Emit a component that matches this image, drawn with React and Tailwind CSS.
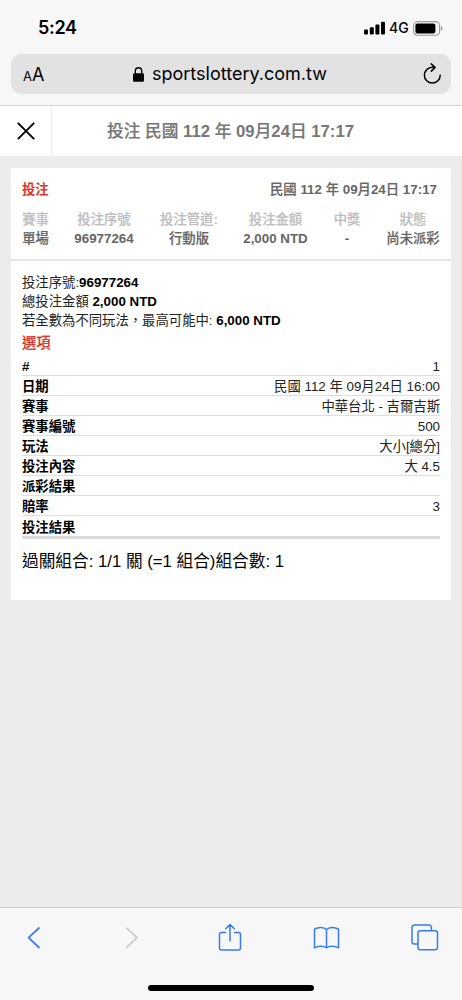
import React from "react";

const summary = [
  { label: "賽事", value: "單場", pos: "w-[27px]" },
  { label: "投注序號", value: "96977264", pos: "ml-[25px] w-[60px]" },
  { label: "投注管道:", value: "行動版", pos: "ml-[25px] w-[60px]" },
  { label: "投注金額", value: "2,000 NTD", pos: "ml-[24px] w-[65px]" },
  { label: "中獎", value: "-", pos: "ml-[24px] w-[30px]" },
  { label: "狀態", value: "尚未派彩", pos: "ml-[24px] w-[54px]" },
];

const rows = [
  ["#", "1"],
  ["日期", "民國 112 年 09月24日 16:00"],
  ["賽事", "中華台北 - 吉爾吉斯"],
  ["賽事編號", "500"],
  ["玩法", "大小[總分]"],
  ["投注內容", "大 4.5"],
  ["派彩結果", ""],
  ["賠率", "3"],
  ["投注結果", ""],
];

// Chinese glyphs take a medium weight while Latin letters and digits stay bold.
function Strong({ children }) {
  return children.split(/([\u4e00-\u9fff]+)/).map((part, i) =>
    /[\u4e00-\u9fff]/.test(part) ? (
      <span key={i} className="font-medium [-webkit-text-stroke:0.2px_currentColor]">{part}</span>
    ) : (
      <span key={i} className="font-bold">{part}</span>
    )
  );
}

function StatusBar() {
  return (
    <div className="flex h-[54px] items-start justify-between pr-[19px] pl-[38px] font-['Inter','Liberation_Sans',sans-serif] text-black">
      <span className="mt-[16px] text-[18px] leading-6 font-semibold tracking-[-0.3px]">5:24</span>
      <div className="mt-[16px] flex h-6 items-center">
        <svg className="h-[14px] w-[21px]" viewBox="0 0 21 14">
          <rect x="0" y="8.5" width="4" height="5" rx="1" />
          <rect x="5.8" y="6.2" width="4" height="7.3" rx="1" />
          <rect x="11.4" y="3.5" width="4" height="10" rx="1" />
          <rect x="17" y="0.7" width="4" height="12.8" rx="1" />
        </svg>
        <span className="ml-[4px] w-[20px] text-[14px] leading-6 font-medium">4G</span>
        <svg className="ml-[4px] h-[15px] w-[30px]" viewBox="0 0 30 15">
          <rect x="0.6" y="0.6" width="26" height="13.6" rx="4" fill="none" stroke="#9b9b9b" strokeWidth="1.1" />
          <rect x="2.4" y="2.4" width="20" height="10" rx="2" />
          <path d="M27.9 5c1 .4 1.6 1.300 1.600 2.400s-.6 2-1.600 2.400z" fill="#9b9b9b" />
        </svg>
      </div>
    </div>
  );
}

function AddressBar() {
  return (
    <div className="mx-[11px] flex h-[40px] items-center rounded-[11px] bg-[#e2e2e3] text-black">
      <div className="ml-[12px] flex w-[24px] items-baseline pt-[2px] font-['Inter','Liberation_Sans',sans-serif] leading-6">
        <span className="text-[13px]">A</span>
        <span className="text-[18px]">A</span>
      </div>
      <svg className="ml-[86px] h-[15px] w-[11px]" viewBox="0 0 11 15">
        <rect x="0" y="6.300" width="11" height="8.500" rx="1.400" />
        <path d="M2.300 7V4.200a3.200 3.400 0 0 1 6.400 0V7" fill="none" stroke="#000" strokeWidth="1.400" />
      </svg>
      <span className="ml-[8px] w-[176px] font-['Inter','Liberation_Sans',sans-serif] text-[18px] leading-6 tracking-[0px] whitespace-nowrap">sportslottery.com.tw</span>
      <svg className="ml-[94px] h-[22px] w-[20px]" viewBox="0 0 20 22" fill="none" stroke="#000" strokeWidth="1.500" strokeLinecap="round" strokeLinejoin="round">
        <path d="M18.200 12.200A7.900 7.900 0 1 1 10.300 4.300h2.700M9.200.9l3.900 3.500-3.700 3.700" />
      </svg>
    </div>
  );
}

function BottomBar() {
  return (
    <div className="mt-auto flex h-[93px] flex-col items-center border-t border-[#cfcfcf] bg-[#f7f7f7]">
      <div className="flex h-[60px] w-full items-center justify-between pr-[23px] pl-[20px]">
        <svg className="h-[24px] w-[28px]" viewBox="-7 0 28 24" fill="none" stroke="#377bf5" strokeWidth="1.800" strokeLinecap="round" strokeLinejoin="round">
          <path d="M12 2 1.600 11.700 12 21.500" />
        </svg>
        <svg className="h-[24px] w-[28px]" viewBox="-7 0 28 24" fill="none" stroke="#c8c8c8" strokeWidth="1.600" strokeLinecap="round" strokeLinejoin="round">
          <path d="M1.600 2 12 11.700 1.600 21.500" />
        </svg>
        <svg className="h-[30px] w-[28px]" viewBox="-2 0 28 30" fill="none" stroke="#377bf5" strokeWidth="1.500" strokeLinecap="round" strokeLinejoin="round">
          <path d="M7.500 9.500H3.500a2 2 0 0 0-2 2V25a2 2 0 0 0 2 2h17a2 2 0 0 0 2-2V11.500a2 2 0 0 0-2-2h-4M12 18V1.500M7.700 5.800 12 1.500l4.300 4.300" />
        </svg>
        <svg className="h-[24px] w-[28px]" viewBox="-0.5 0.5 28 24" fill="none" stroke="#377bf5" strokeWidth="1.500" strokeLinejoin="round">
          <path d="M13 4C10.500 1.300 4.500 1.200 1 3.700V22.300c3.500-2.100 9.500-2.100 12 0 2.500-2.100 8.500-2.100 12 0V3.700C21.500 1.200 15.500 1.300 13 4zM13 4v18.300" />
        </svg>
        <svg className="h-[28px] w-[28px]" viewBox="0.5 0.7 28 28" fill="none" stroke="#377bf5" strokeWidth="1.500" strokeLinejoin="round">
          <rect x="7.500" y="7.500" width="19.500" height="19" rx="2.300" />
          <path d="M20.900 7.500V4a2.300 2.300 0 0 0-2.300-2.300H3.800A2.300 2.300 0 0 0 1.500 4v14.500a2.300 2.300 0 0 0 2.300 2.300h3.700" />
        </svg>
      </div>
      <div className="mt-[17px] h-[6px] w-[166px] rounded-full bg-black" />
    </div>
  );
}

export default function App() {
  return (
    <div lang="zh-TW" className="flex h-[1000px] w-[462px] flex-col overflow-hidden bg-[#ececec] font-['Liberation_Sans','Noto_Sans_CJK_TC',sans-serif] text-[13.35px] text-[#222]">
      <div className="h-[106px] shrink-0 border-b border-[#d4d4d4] bg-[#f7f7f7]">
        <StatusBar />
        <AddressBar />
      </div>

      <header className="flex h-[50px] shrink-0 bg-white">
        <button className="flex w-[52px] items-center justify-center border-r border-[#ececec]">
          <svg className="h-[18px] w-[18px]" viewBox="0 0 18 18" fill="none" stroke="#000" strokeWidth="1.900">
            <path d="M.8.8l16.400 16.400M17.200.8.8 17.200" />
          </svg>
        </button>
        <h1 className="ml-[55px] text-[16.72px] leading-[51px] whitespace-nowrap text-[#777]">
          <Strong>投注 民國 112 年 09月24日 17:17</Strong>
        </h1>
      </header>

      <main className="mx-[11px] mt-[12px] h-[432px] shrink-0 bg-white">
        <section className="h-[93px] border-b-2 border-[#e7e7e7] px-[11px] pt-[12px] text-[#666]">
          <div className="flex justify-between pr-[3px] leading-5 whitespace-nowrap">
            <h2 className="font-bold text-[#e0352b]">投注</h2>
            <span><Strong>民國 112 年 09月24日 17:17</Strong></span>
          </div>
          <div className="mt-[10px] flex text-center leading-[20px] whitespace-nowrap">
            {summary.map((s) => (
              <div key={s.label} className={"flex flex-col items-center " + s.pos}>
                <span className="text-[#bebebe]"><Strong>{s.label}</Strong></span>
                <span className="-mt-px"><Strong>{s.value}</Strong></span>
              </div>
            ))}
          </div>
        </section>

        <section className="px-[11px] pt-[12px]">
          <div className="leading-[19px] whitespace-nowrap">
            <p>投注序號:<b className="text-black">96977264</b></p>
            <p>總投注金額 <b className="text-black">2,000 NTD</b></p>
            <p>若全數為不同玩法，最高可能中: <b className="text-black">6,000 NTD</b></p>
          </div>
          <h3 className="mt-px text-[14.3px] leading-[25px] text-[#e0352b]"><Strong>選項</Strong></h3>
          <dl className="border-b-3 border-[#dadada]">
            {rows.map(([k, v], i) => (
              <div key={k} className={"flex h-[20.05px] items-center justify-between pt-[2px] leading-[19px] whitespace-nowrap " + (i < rows.length - 1 ? "border-b border-[#dedede]" : "")}>
                <dt className="font-bold text-black">{k}</dt>
                <dd>{v}</dd>
              </div>
            ))}
          </dl>
          <p className="mt-[11px] text-[16.7px] leading-6 whitespace-nowrap text-black">過關組合: 1/1 關 (=1 組合)組合數: 1</p>
        </section>
      </main>

      <BottomBar />
    </div>
  );
}
